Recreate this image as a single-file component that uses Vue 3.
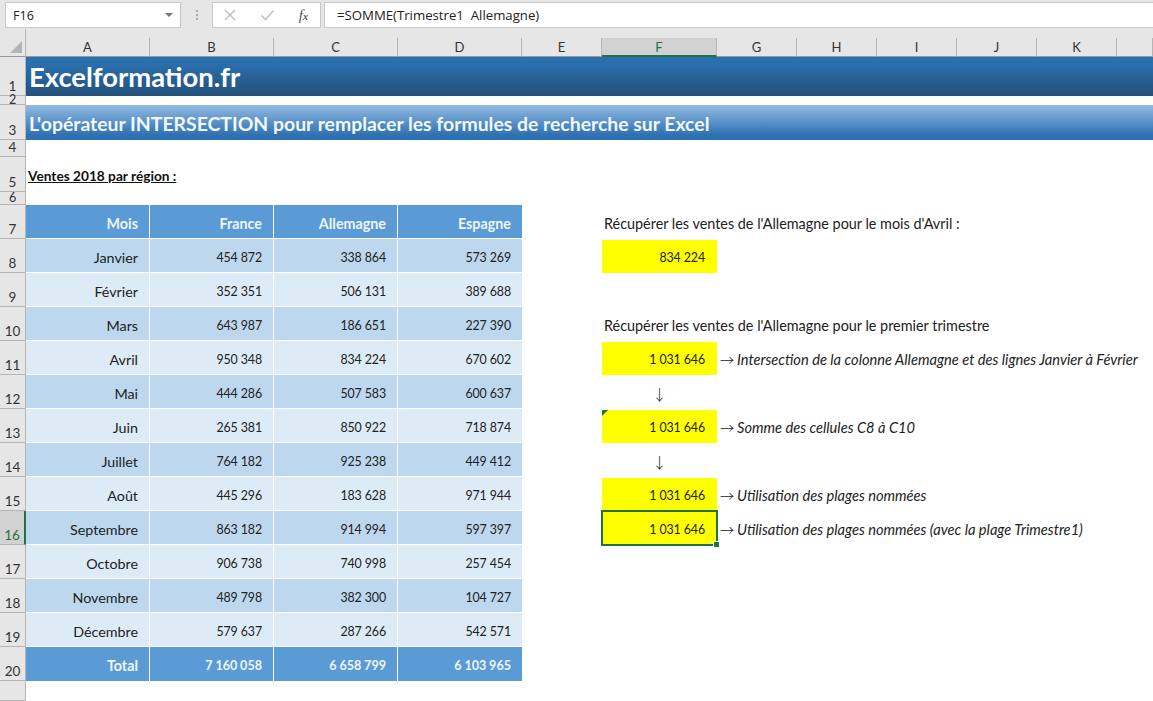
<script setup>
const columns = [
  ['A', 124], ['B', 124], ['C', 124], ['D', 124], ['E', 80], ['F', 115],
  ['G', 80], ['H', 80], ['I', 80], ['J', 80], ['K', 80], ['', 36]
]
const months = [
  ['Janvier', '454 872', '338 864', '573 269'],
  ['Février', '352 351', '506 131', '389 688'],
  ['Mars', '643 987', '186 651', '227 390'],
  ['Avril', '950 348', '834 224', '670 602'],
  ['Mai', '444 286', '507 583', '600 637'],
  ['Juin', '265 381', '850 922', '718 874'],
  ['Juillet', '764 182', '925 238', '449 412'],
  ['Août', '445 296', '183 628', '971 944'],
  ['Septembre', '863 182', '914 994', '597 397'],
  ['Octobre', '906 738', '740 998', '257 454'],
  ['Novembre', '489 798', '382 300', '104 727'],
  ['Décembre', '579 637', '287 266', '542 571']
]
const side = {
  7: { text: "Récupérer les ventes de l'Allemagne pour le mois d'Avril :" },
  8: { value: '834 224' },
  10: { text: "Récupérer les ventes de l'Allemagne pour le premier trimestre" },
  11: { value: '1 031 646', note: 'Intersection de la colonne Allemagne et des lignes Janvier à Février' },
  12: { down: true },
  13: { value: '1 031 646', note: 'Somme des cellules C8 à C10', flag: true },
  14: { down: true },
  15: { value: '1 031 646', note: 'Utilisation des plages nommées' },
  16: { value: '1 031 646', note: 'Utilisation des plages nommées (avec la plage Trimestre1)', selected: true }
}
const tableRows = [
  { n: 7, h: 34, kind: 'head', cells: ['Mois', 'France', 'Allemagne', 'Espagne'] },
  ...months.map((cells, i) => ({ n: i + 8, h: 34, kind: i % 2 ? 'light' : 'dark', cells })),
  { n: 20, h: 34, kind: 'total', cells: ['Total', '7 160 058', '6 658 799', '6 103 965'] }
]
const formula = '=SOMME(Trimestre1  Allemagne)'
</script>

<template>
  <div class="app">
    <div class="bar">
      <div class="namebox"><span>F16</span><i class="caret"></i></div>
      <div class="dots"><b></b><b></b><b></b></div>
      <div class="fnbox">
        <svg width="14" height="12" viewBox="0 0 14 12"><path d="M2 1l10 10M12 1L2 11" stroke="#c4c4c4" stroke-width="1.6" fill="none"/></svg>
        <svg width="15" height="12" viewBox="0 0 15 12"><path d="M1.5 6.5l4 4 8-9" stroke="#c4c4c4" stroke-width="1.6" fill="none"/></svg>
        <span class="fx">f<small>x</small></span>
      </div>
      <div class="formula">{{ formula }}</div>
    </div>

    <div class="colhead">
      <div class="corner"><i></i></div>
      <div v-for="c in columns" :key="c[0]" class="col" :class="{ on: c[0] === 'F' }" :style="{ width: c[1] + 'px' }">{{ c[0] }}</div>
    </div>

    <div class="row" style="height:39px"><div class="rh">1</div><div class="banner b1">Excelformation.fr</div></div>
    <div class="row" style="height:9px"><div class="rh tiny">2</div></div>
    <div class="row" style="height:35px"><div class="rh">3</div><div class="banner b3">L'opérateur INTERSECTION pour remplacer les formules de recherche sur Excel</div></div>
    <div class="row" style="height:17px"><div class="rh">4</div></div>
    <div class="row" style="height:35px"><div class="rh">5</div><div class="heading">Ventes 2018 par région :</div></div>
    <div class="row" style="height:13px"><div class="rh tiny">6</div></div>

    <div v-for="r in tableRows" :key="r.n" class="row" :style="{ height: r.h + 'px' }">
      <div class="rh" :class="{ on: r.n === 16 }">{{ r.n }}</div>
      <div v-for="(c, i) in r.cells" :key="i" class="cell" :class="[r.kind, { num: i > 0 && r.kind !== 'head' }]">{{ c }}</div>
      <div class="gap"></div>
      <template v-if="side[r.n]">
        <div v-if="side[r.n].text" class="sidetext">{{ side[r.n].text }}</div>
        <template v-else-if="side[r.n].down">
          <div class="fcell down">↓</div>
        </template>
        <template v-else>
          <div class="fcell yellow" :class="{ selected: side[r.n].selected }">
            <i v-if="side[r.n].flag" class="flag"></i>
            {{ side[r.n].value }}
            <i v-if="side[r.n].selected" class="handle"></i>
          </div>
          <div v-if="side[r.n].note" class="note"><span class="arrow">→</span><em>{{ side[r.n].note }}</em></div>
        </template>
      </template>
    </div>

    <div class="row" style="height:20px"><div class="rh"></div></div>
  </div>
</template>

<style scoped>
.app {
  width: 1153px;
  height: 701px;
  overflow: hidden;
  background: #fff;
  color: #222;
  font-family: Lato, "Open Sans", sans-serif;
  font-size: 14.3px;
}
.bar {
  height: 29px;
  background: #e6e6e6;
  display: flex;
  align-items: stretch;
  padding: 2px 0 1px 5px;
  box-sizing: border-box;
  font-family: "Open Sans", sans-serif;
  font-size: 12.6px;
}
.namebox, .fnbox, .formula {
  background: #fff;
  border: 1px solid #c8c8c8;
  box-sizing: border-box;
  display: flex;
  align-items: center;
}
.namebox {
  width: 176px;
  padding: 0 7px;
  justify-content: space-between;
}
.caret {
  width: 0;
  height: 0;
  border: 4px solid transparent;
  border-top: 4px solid #777;
  border-bottom: 0;
}
.dots {
  width: 31px;
  display: flex;
  flex-direction: column;
  justify-content: center;
  align-items: center;
  gap: 2px;
}
.dots b {
  width: 2px;
  height: 2px;
  background: #aaa;
}
.fnbox {
  width: 109px;
  padding: 0 12px 0 10px;
  justify-content: space-between;
}
.fx {
  font-family: "Liberation Serif", serif;
  font-style: italic;
  font-size: 15px;
  color: #555;
}
.fx small {
  font-size: 10px;
  font-weight: 700;
}
.formula {
  flex: 1;
  margin-left: 3px;
  padding-left: 12px;
  border-right: 0;
  white-space: pre;
  font-size: 13.2px;
}
.colhead {
  height: 28px;
  display: flex;
  background: #e6e6e6;
}
.corner {
  width: 26px;
  position: relative;
  border-right: 1px solid #b5b5b5;
  border-bottom: 1px solid #9a9a9a;
  box-sizing: border-box;
  flex: none;
}
.corner i {
  position: absolute;
  right: 3px;
  bottom: 3px;
  width: 0;
  height: 0;
  border-left: 12px solid transparent;
  border-bottom: 12px solid #b4b4b4;
}
.col {
  flex: none;
  box-sizing: border-box;
  margin-top: 9px;
  border-right: 1px solid #b5b5b5;
  border-bottom: 1px solid #9a9a9a;
  text-align: center;
  line-height: 19px;
  font-size: 13px;
  color: #333;
}
.col.on {
  background: #d2d2d2;
  color: #217346;
  border-bottom: 2px solid #217346;
}
.row {
  display: flex;
  flex: none;
}
.rh {
  width: 26px;
  flex: none;
  box-sizing: border-box;
  background: #e6e6e6;
  border-right: 1px solid #b5b5b5;
  border-bottom: 1px solid #b5b5b5;
  display: flex;
  align-items: flex-end;
  justify-content: center;
  font-size: 13.5px;
  line-height: 18px;
  color: #333;
}
.rh.tiny {
  align-items: center;
  line-height: 8px;
  font-size: 12.5px;
}
.rh.on {
  background: #d2d2d2;
  color: #217346;
  border-right: 2px solid #217346;
}
.banner {
  flex: 1;
  display: flex;
  align-items: center;
  color: #fff;
  font-weight: 700;
}
.b1 {
  padding-left: 3px;
  font-size: 27.4px;
  background: linear-gradient(#2b6fae 15%, #245079);
}
.b3 {
  padding-left: 3px;
  padding-top: 2px;
  font-size: 19.4px;
  background: linear-gradient(#93bbe2, #2f72b3 85%);
  color: #f2f8fd;
}
.heading {
  align-self: flex-end;
  padding: 0 0 8px 2px;
  font-weight: 700;
  font-size: 13.7px;
  line-height: 17px;
  text-decoration: underline;
  color: #111;
}
.cell {
  width: 124px;
  flex: none;
  box-sizing: border-box;
  padding: 3px 11px 0 0;
  display: flex;
  align-items: center;
  justify-content: flex-end;
  border-right: 1px solid #fff;
  border-bottom: 1px solid #fff;
}
.cell:nth-child(5) {
  border-right: 0;
}
.num {
  font-size: 12.4px;
  letter-spacing: -0.1px;
}
.cell.head, .cell.total {
  background: #5b9bd5;
  color: #eef5fb;
  font-weight: 700;
}
.cell.head {
  height: 33px;
  margin-bottom: 1px;
  border-bottom: 0;
}
.cell.total {
  border-bottom: 0;
}
.cell.total.num {
  font-size: 12.6px;
  letter-spacing: 0;
  word-spacing: -0.3px;
}
.cell.dark {
  background: #bdd7ee;
}
.cell.light {
  background: #ddebf7;
}
.gap {
  width: 80px;
  flex: none;
}
.sidetext {
  padding: 2px 0 0 2px;
  display: flex;
  align-items: center;
  white-space: nowrap;
  font-size: 14.4px;
}
.fcell {
  width: 115px;
  flex: none;
  box-sizing: border-box;
  padding-right: 12px;
  display: flex;
  align-items: center;
  justify-content: flex-end;
  position: relative;
  font-size: 12.4px;
  letter-spacing: -0.1px;
  padding-top: 1px;
}
.yellow {
  background: #ffff00;
  margin-top: 1px;
}
.down {
  justify-content: center;
  padding: 3px 0 0;
  font-family: "Noto Sans CJK JP", sans-serif;
  font-weight: 300;
  font-size: 15px;
}
.selected {
  margin-top: 0;
  padding-top: 2px;
  outline: 2px solid #217346;
  outline-offset: -1px;
  z-index: 1;
}
.flag {
  position: absolute;
  left: 0;
  top: 0;
  width: 0;
  height: 0;
  border-right: 6px solid transparent;
  border-top: 6px solid #1f7a33;
}
.handle {
  position: absolute;
  right: -3px;
  bottom: -3px;
  width: 5px;
  height: 5px;
  background: #217346;
  border: 1px solid #fff;
  box-sizing: content-box;
}
.note {
  display: flex;
  align-items: center;
  white-space: nowrap;
  padding: 2px 0 0 3px;
  gap: 3px;
}
.note em {
  font-size: 14.65px;
}
.arrow {
  font-family: "Noto Sans CJK JP", sans-serif;
  font-weight: 300;
  font-size: 14px;
}
</style>

<style>
html, body {
  margin: 0;
  background: #fff;
}
</style>
